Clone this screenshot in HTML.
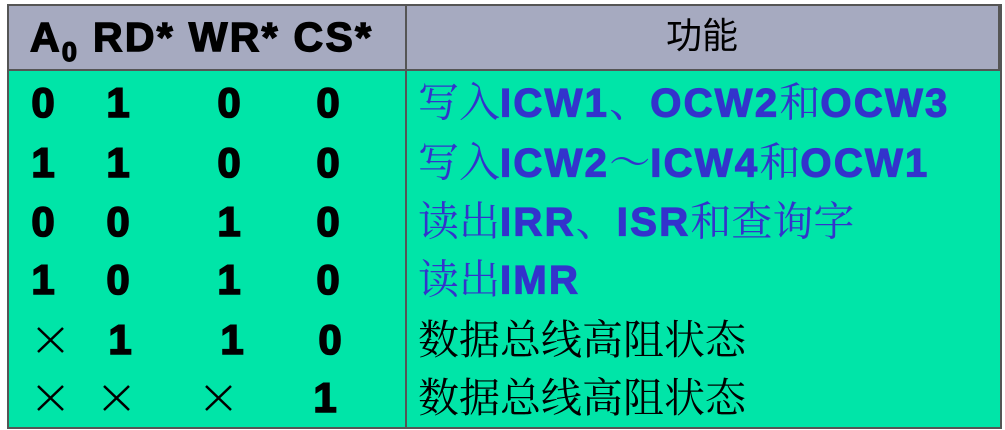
<!DOCTYPE html><html><head><meta charset="utf-8"><style>
body{margin:0;width:1005px;height:430px;background:#fff;position:relative;overflow:hidden;font-family:"Liberation Sans",sans-serif}
.t{position:absolute;left:7px;top:4px;width:991px;height:421px;border:2px solid #555;background:#00e5a8}
.h{position:absolute;left:7px;top:4px;width:993px;height:67px;background:#a6aac0;border:2px solid #555;box-sizing:border-box}
.v{position:absolute;left:405px;top:4px;width:2px;height:423px;background:#555}
.d{position:absolute;font-weight:bold;font-size:42px;line-height:40px;transform:translate(-50%,-50%);color:#000;-webkit-text-stroke:1.6px #000}
.c{position:absolute;left:418px;font-size:41px;line-height:44px;transform:translateY(-50%);color:#3333cc;font-family:"Liberation Serif","Noto Serif CJK SC",serif;white-space:nowrap}
.c b{font-family:"Liberation Sans",sans-serif;font-size:40px;letter-spacing:2.3px;-webkit-text-stroke:1.2px #3333cc}
.k{color:#000}
</style></head><body>
<div class="t"></div><div class="h"></div><div class="v"></div>
<div style="position:absolute;left:30px;top:17px;font-weight:bold;font-size:41px;line-height:40px;white-space:nowrap;letter-spacing:2.3px;-webkit-text-stroke:1.4px #000">A<span style="font-size:27px;position:relative;top:10px">0</span> RD* WR* CS*</div>
<div style="position:absolute;left:666px;top:16px;font-size:36px;line-height:40px;font-family:'Liberation Sans','Noto Sans CJK SC',sans-serif">功能</div>
<div class="d" style="left:43px;top:103px">0</div><div class="d" style="left:118px;top:103px">1</div><div class="d" style="left:229px;top:103px">0</div><div class="d" style="left:328px;top:103px">0</div>
<div class="d" style="left:43px;top:163px">1</div><div class="d" style="left:118px;top:163px">1</div><div class="d" style="left:229px;top:163px">0</div><div class="d" style="left:328px;top:163px">0</div>
<div class="d" style="left:43px;top:222px">0</div><div class="d" style="left:118px;top:222px">0</div><div class="d" style="left:229px;top:222px">1</div><div class="d" style="left:328px;top:222px">0</div>
<div class="d" style="left:43px;top:280px">1</div><div class="d" style="left:118px;top:280px">0</div><div class="d" style="left:229px;top:280px">1</div><div class="d" style="left:328px;top:280px">0</div>
<div class="d" style="left:120px;top:340px">1</div><div class="d" style="left:232px;top:340px">1</div><div class="d" style="left:330px;top:340px">0</div>
<div class="d" style="left:325px;top:398px">1</div>
<svg style="position:absolute;left:0;top:0" width="405" height="430" stroke="#000" stroke-width="2.5">
<path d="M38 328L63 352M63 328L38 352"/>
<path d="M38 386L63 410M63 386L38 410"/>
<path d="M104 386L129 410M129 386L104 410"/>
<path d="M206 386L231 410M231 386L206 410"/>
</svg>
<div class="c" style="top:103px">写入<b>ICW1</b>、<b>OCW2</b>和<b>OCW3</b></div>
<div class="c" style="top:163px">写入<b>ICW2</b>～<b>ICW4</b>和<b>OCW1</b></div>
<div class="c" style="top:222px">读出<b>IRR</b>、<b>ISR</b>和查询字</div>
<div class="c" style="top:280px">读出<b>IMR</b></div>
<div class="c k" style="top:340px">数据总线高阻状态</div>
<div class="c k" style="top:398px">数据总线高阻状态</div>
</body></html>
